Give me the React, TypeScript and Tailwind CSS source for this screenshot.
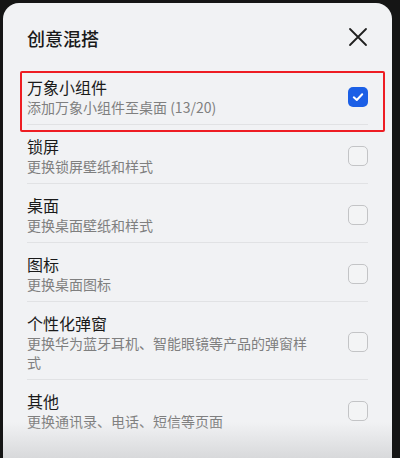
import React from "react";

type Item = { title: string; sub: string; checked?: boolean };

const items: Item[] = [
  { title: "万象小组件", sub: "添加万象小组件至桌面 (13/20)", checked: true },
  { title: "锁屏", sub: "更换锁屏壁纸和样式" },
  { title: "桌面", sub: "更换桌面壁纸和样式" },
  { title: "图标", sub: "更换桌面图标" },
  { title: "个性化弹窗", sub: "更换华为蓝牙耳机、智能眼镜等产品的弹窗样式" },
  { title: "其他", sub: "更换通讯录、电话、短信等页面" },
];

function Check({ checked }: { checked?: boolean }) {
  if (checked) {
    return (
      <div className="w-[20px] h-[20px] rounded-[5px] bg-[#1b5fe6] flex items-center justify-center shrink-0">
        <svg width="14" height="14" viewBox="0 0 14 14" fill="none">
          <path d="M2.8 7.3 L5.8 10 L11.2 4.2" stroke="#ffffff" strokeWidth="2" strokeLinecap="round" strokeLinejoin="round" />
        </svg>
      </div>
    );
  }
  return <div className="w-[20px] h-[20px] rounded-[5px] border-[1.5px] border-[#c3c4c6] bg-[#f3f4f5] shrink-0" />;
}

export default function App() {
  return (
    <div
      className="w-[400px] h-[458px] bg-[#151515] pt-[3px] pl-[3px] pr-[8px] overflow-hidden"
      style={{ fontFamily: '"Noto Sans CJK SC", "Noto Sans", sans-serif' }}
    >
      <div className="relative h-[455px] bg-[#f1f2f4] rounded-t-[16px] overflow-hidden">
        <div className="flex items-center justify-between pl-[24px] pr-[24px] pt-[23px] pb-[16px]">
          <div className="text-[18px] leading-[24px] text-[#1a1a1a] font-medium">创意混搭</div>
          <svg width="20" height="20" viewBox="0 0 20 20" fill="none" className="mt-[-3px]">
            <path d="M2 2 L18 18 M18 2 L2 18" stroke="#1f1f1f" strokeWidth="1.8" strokeLinecap="round" />
          </svg>
        </div>
        <div className="px-[24px] flex flex-col">
          {items.map((it, i) => (
            <div
              key={i}
              className={`relative flex items-center justify-between pt-[10px] pb-[7px] ${i < items.length - 1 ? "border-b border-[#e1e2e4]" : ""}`}
            >
              <div className="w-[286px] flex flex-col">
                <div className="text-[16px] leading-[22px] text-[#1a1a1a]">{it.title}</div>
                <div className="text-[14px] leading-[19px] text-[#7f7f7f]">{it.sub}</div>
              </div>
              <Check checked={it.checked} />
              {i === 0 && (
                <div className="absolute left-[-7px] top-[5px] w-[365px] h-[61px] border-2 border-[#ee1d23] rounded-[2px] pointer-events-none" />
              )}
            </div>
          ))}
        </div>
        <div className="absolute left-0 right-0 bottom-0 h-[36px] bg-gradient-to-b from-[#f1f2f400] to-[#d8d9db] pointer-events-none" />
      </div>
    </div>
  );
}
